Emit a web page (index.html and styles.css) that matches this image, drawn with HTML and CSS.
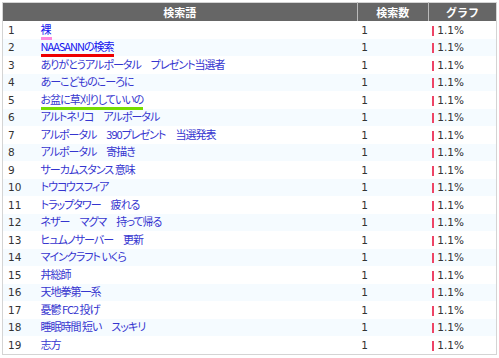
FILE: index.html
```html
<!DOCTYPE html>
<html lang="ja">
<head>
<meta charset="utf-8">
<link rel="stylesheet" href="styles.css">
</head>
<body>
<div class="wrap">
<table class="rank">
<colgroup><col class="c-no"><col class="c-kw"><col class="c-num"><col class="c-gr"></colgroup>
<thead>
<tr><th colspan="2" class="h-kw">検索語</th><th class="h-num">検索数</th><th class="h-graph">グラフ</th></tr>
</thead>
<tbody>
<tr><td class="no">1</td><td class="kw"><a class="strong mark pink">裸</a></td><td class="cnt">1</td><td class="gr"><span class="bar"></span>1.1%</td></tr>
<tr><td class="no">2</td><td class="kw"><a class="strong mark red">NAASANNの検索</a></td><td class="cnt">1</td><td class="gr"><span class="bar"></span>1.1%</td></tr>
<tr><td class="no">3</td><td class="kw"><a>ありがとうアルポータル　プレゼント当選者</a></td><td class="cnt">1</td><td class="gr"><span class="bar"></span>1.1%</td></tr>
<tr><td class="no">4</td><td class="kw"><a>あーこどものこーろに</a></td><td class="cnt">1</td><td class="gr"><span class="bar"></span>1.1%</td></tr>
<tr><td class="no">5</td><td class="kw"><a class="mark green">お盆に草刈りしていいの</a></td><td class="cnt">1</td><td class="gr"><span class="bar"></span>1.1%</td></tr>
<tr><td class="no">6</td><td class="kw"><a>アルトネリコ　アルポータル</a></td><td class="cnt">1</td><td class="gr"><span class="bar"></span>1.1%</td></tr>
<tr><td class="no">7</td><td class="kw"><a>アルポータル　390プレゼント　当選発表</a></td><td class="cnt">1</td><td class="gr"><span class="bar"></span>1.1%</td></tr>
<tr><td class="no">8</td><td class="kw"><a>アルポータル　寄描き</a></td><td class="cnt">1</td><td class="gr"><span class="bar"></span>1.1%</td></tr>
<tr><td class="no">9</td><td class="kw"><a>サーカムスタンス 意味</a></td><td class="cnt">1</td><td class="gr"><span class="bar"></span>1.1%</td></tr>
<tr><td class="no">10</td><td class="kw"><a>トウコウスフィア</a></td><td class="cnt">1</td><td class="gr"><span class="bar"></span>1.1%</td></tr>
<tr><td class="no">11</td><td class="kw"><a>トラップタワー　疲れる</a></td><td class="cnt">1</td><td class="gr"><span class="bar"></span>1.1%</td></tr>
<tr><td class="no">12</td><td class="kw"><a>ネザー　マグマ　持って帰る</a></td><td class="cnt">1</td><td class="gr"><span class="bar"></span>1.1%</td></tr>
<tr><td class="no">13</td><td class="kw"><a>ヒュムノサーバー　更新</a></td><td class="cnt">1</td><td class="gr"><span class="bar"></span>1.1%</td></tr>
<tr><td class="no">14</td><td class="kw"><a>マインクラフト いくら</a></td><td class="cnt">1</td><td class="gr"><span class="bar"></span>1.1%</td></tr>
<tr><td class="no">15</td><td class="kw"><a>丼総師</a></td><td class="cnt">1</td><td class="gr"><span class="bar"></span>1.1%</td></tr>
<tr><td class="no">16</td><td class="kw"><a>天地拳第一系</a></td><td class="cnt">1</td><td class="gr"><span class="bar"></span>1.1%</td></tr>
<tr><td class="no">17</td><td class="kw"><a>憂鬱 FC2 投げ</a></td><td class="cnt">1</td><td class="gr"><span class="bar"></span>1.1%</td></tr>
<tr><td class="no">18</td><td class="kw"><a>睡眠時間 短い　スッキリ</a></td><td class="cnt">1</td><td class="gr"><span class="bar"></span>1.1%</td></tr>
<tr><td class="no">19</td><td class="kw"><a>志方</a></td><td class="cnt">1</td><td class="gr"><span class="bar"></span>1.1%</td></tr>
</tbody>
</table>
</div>
</body>
</html>
```
FILE: styles.css
```css
html, body {
  margin: 0;
  padding: 0;
  background: #fff;
}
.wrap {
  padding: 2px 0 0 2px;
}
.rank {
  width: 495px;
  border-collapse: collapse;
  border: 1px solid #d4d4d4;
  font-family: "DejaVu Sans", sans-serif;
  font-size: 10.5px;
  color: #333;
  table-layout: fixed;
}
.c-no { width: 33px; }
.c-kw { width: 321px; }
.c-num { width: 71px; }
.c-gr { width: 68px; }
.rank th {
  background: #666;
  color: #fff;
  font-weight: bold;
  font-family: "Noto Sans CJK JP", sans-serif;
  font-size: 11px;
  height: 18px;
  padding: 0;
  text-align: center;
  border-left: 1px solid #bbb;
  line-height: 18px;
}
.rank th.h-kw {
  border-left: none;
}
.rank td {
  height: 17.5px;
  padding: 0;
  line-height: 14px;
  white-space: nowrap;
  vertical-align: middle;
}
.rank tbody tr:nth-child(even) td {
  background: #f5fbff;
}
.rank td.no {
  padding-left: 5px;
}
.rank td.kw {
  padding-left: 5px;
}
.rank td.kw a {
  color: #3535cf;
  font-family: "Noto Sans CJK JP", sans-serif;
  font-size: 11px;
  line-height: 13px;
  letter-spacing: -1px;
  font-feature-settings: "palt";
  text-decoration: none;
}
.rank td.kw a.strong {
  color: #1111ee;
}
.rank td.cnt {
  padding-left: 4px;
}
.rank td.gr {
  padding-left: 4px;
}
.bar {
  display: inline-block;
  width: 2px;
  height: 10px;
  background: #ee4466;
  vertical-align: middle;
  margin-right: 3px;
}
.mark {
  border-bottom: 3px solid transparent;
}
.mark.pink {
  border-color: #ff88dd;
  padding-right: 1px;
}
.mark.red {
  border-color: #ee0000;
}
.mark.green {
  border-color: #77dd00;
}
```
